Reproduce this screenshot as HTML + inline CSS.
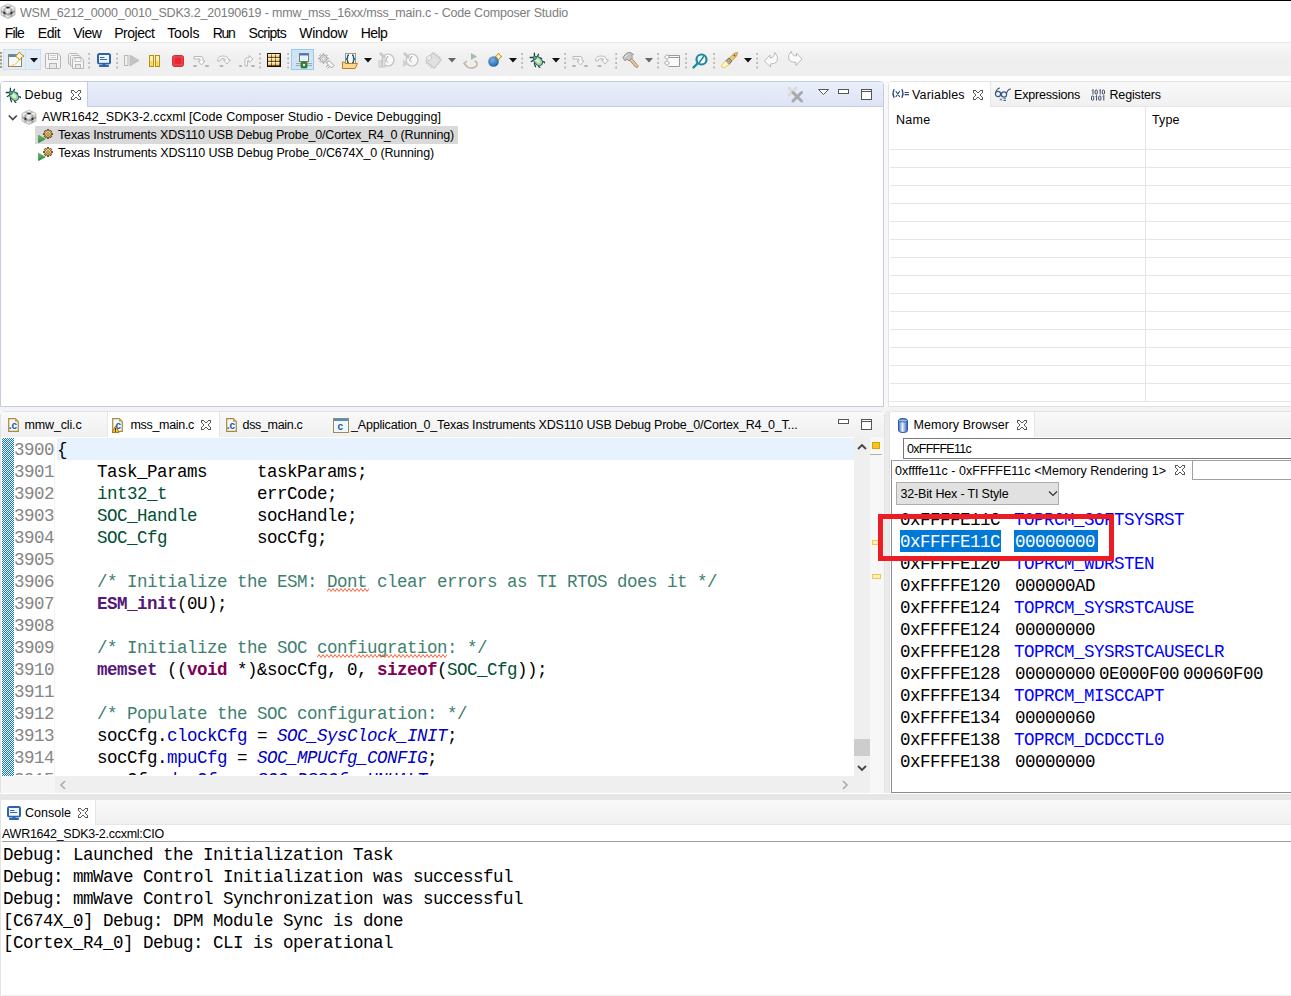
<!DOCTYPE html>
<html><head><meta charset="utf-8"><style>
html,body{margin:0;padding:0;}
body{width:1291px;height:996px;position:relative;overflow:hidden;background:#fff;font-family:'Liberation Sans', sans-serif;}
svg{position:absolute;}
</style></head><body>
<div style="position:absolute;left:0px;top:0px;width:1291px;height:1px;background:#000;"></div>
<svg style="left:0px;top:3px;" width="16" height="16" viewBox="0 0 16 16"><g transform="scale(1.0)"><g transform="matrix(7,-3.5,7,3.5,1,4.5)"><rect x="0.0000" y="0.0000" width="0.3434" height="0.3434" fill="#f4f4f4"/><rect x="0.0000" y="0.3333" width="0.3434" height="0.3434" fill="#b8b8b8"/><rect x="0.0000" y="0.6667" width="0.3434" height="0.3434" fill="#f4f4f4"/><rect x="0.3333" y="0.0000" width="0.3434" height="0.3434" fill="#b8b8b8"/><rect x="0.3333" y="0.3333" width="0.3434" height="0.3434" fill="#2a2a2a"/><rect x="0.3333" y="0.6667" width="0.3434" height="0.3434" fill="#b8b8b8"/><rect x="0.6667" y="0.0000" width="0.3434" height="0.3434" fill="#f4f4f4"/><rect x="0.6667" y="0.3333" width="0.3434" height="0.3434" fill="#b8b8b8"/><rect x="0.6667" y="0.6667" width="0.3434" height="0.3434" fill="#f4f4f4"/></g><g transform="matrix(7,3.5,0,7.5,1,4.5)"><rect x="0.0000" y="0.0000" width="0.3434" height="0.3434" fill="#e6e6e6"/><rect x="0.0000" y="0.3333" width="0.3434" height="0.3434" fill="#a8a8a8"/><rect x="0.0000" y="0.6667" width="0.3434" height="0.3434" fill="#e6e6e6"/><rect x="0.3333" y="0.0000" width="0.3434" height="0.3434" fill="#a8a8a8"/><rect x="0.3333" y="0.3333" width="0.3434" height="0.3434" fill="#2a2a2a"/><rect x="0.3333" y="0.6667" width="0.3434" height="0.3434" fill="#a8a8a8"/><rect x="0.6667" y="0.0000" width="0.3434" height="0.3434" fill="#e6e6e6"/><rect x="0.6667" y="0.3333" width="0.3434" height="0.3434" fill="#a8a8a8"/><rect x="0.6667" y="0.6667" width="0.3434" height="0.3434" fill="#e6e6e6"/></g><g transform="matrix(7,-3.5,0,7.5,8,8)"><rect x="0.0000" y="0.0000" width="0.3434" height="0.3434" fill="#d8d8d8"/><rect x="0.0000" y="0.3333" width="0.3434" height="0.3434" fill="#9a9a9a"/><rect x="0.0000" y="0.6667" width="0.3434" height="0.3434" fill="#d8d8d8"/><rect x="0.3333" y="0.0000" width="0.3434" height="0.3434" fill="#9a9a9a"/><rect x="0.3333" y="0.3333" width="0.3434" height="0.3434" fill="#2a2a2a"/><rect x="0.3333" y="0.6667" width="0.3434" height="0.3434" fill="#9a9a9a"/><rect x="0.6667" y="0.0000" width="0.3434" height="0.3434" fill="#d8d8d8"/><rect x="0.6667" y="0.3333" width="0.3434" height="0.3434" fill="#9a9a9a"/><rect x="0.6667" y="0.6667" width="0.3434" height="0.3434" fill="#d8d8d8"/></g><path d="M8,1 L15,4.5 L15,12 L8,15.5 L1,12 L1,4.5 Z" fill="none" stroke="#9a9a9a" stroke-width="0.6"/></g></svg>
<div style="position:absolute;left:20px;top:7px;line-height:13.96px;white-space:pre;font-family:'Liberation Sans', sans-serif;font-size:12.5px;color:#7c7c7c;letter-spacing:-0.178px;">WSM_6212_0000_0010_SDK3.2_20190619 - mmw_mss_16xx/mss_main.c - Code Composer Studio</div>
<div style="position:absolute;left:4.8px;top:26px;line-height:15.64px;white-space:pre;font-family:'Liberation Sans', sans-serif;font-size:14px;color:#000;letter-spacing:-0.891px;">File</div>
<div style="position:absolute;left:37.800000000000004px;top:26px;line-height:15.64px;white-space:pre;font-family:'Liberation Sans', sans-serif;font-size:14px;color:#000;letter-spacing:-0.431px;">Edit</div>
<div style="position:absolute;left:73.2px;top:26px;line-height:15.64px;white-space:pre;font-family:'Liberation Sans', sans-serif;font-size:14px;color:#000;letter-spacing:-0.473px;">View</div>
<div style="position:absolute;left:114.2px;top:26px;line-height:15.64px;white-space:pre;font-family:'Liberation Sans', sans-serif;font-size:14px;color:#000;letter-spacing:-0.483px;">Project</div>
<div style="position:absolute;left:167.2px;top:26px;line-height:15.64px;white-space:pre;font-family:'Liberation Sans', sans-serif;font-size:14px;color:#000;letter-spacing:-0.097px;">Tools</div>
<div style="position:absolute;left:212.79999999999998px;top:26px;line-height:15.64px;white-space:pre;font-family:'Liberation Sans', sans-serif;font-size:14px;color:#000;letter-spacing:-1.296px;">Run</div>
<div style="position:absolute;left:248.6px;top:26px;line-height:15.64px;white-space:pre;font-family:'Liberation Sans', sans-serif;font-size:14px;color:#000;letter-spacing:-0.785px;">Scripts</div>
<div style="position:absolute;left:299.2px;top:26px;line-height:15.64px;white-space:pre;font-family:'Liberation Sans', sans-serif;font-size:14px;color:#000;letter-spacing:-0.266px;">Window</div>
<div style="position:absolute;left:360.7px;top:26px;line-height:15.64px;white-space:pre;font-family:'Liberation Sans', sans-serif;font-size:14px;color:#000;letter-spacing:-0.524px;">Help</div>
<div style="position:absolute;left:0px;top:42px;width:1291px;height:34px;background:linear-gradient(#f9f9f9,#efefef 50%,#efefef);"></div>
<div style="position:absolute;left:0px;top:42px;width:1291px;height:1px;background:#ebebeb;"></div>
<svg style="left:0px;top:51px;" width="2" height="17" viewBox="0 0 2 17"><rect x="0" y="1" width="2" height="2" fill="#a39a88"/><rect x="0" y="4.5" width="2" height="2" fill="#a39a88"/><rect x="0" y="8" width="2" height="2" fill="#a39a88"/><rect x="0" y="11.5" width="2" height="2" fill="#a39a88"/><rect x="0" y="15" width="2" height="2" fill="#a39a88"/></svg>
<div style="position:absolute;left:3px;top:49px;width:38px;height:21px;box-sizing:border-box;background:#e3edf7;border:1px solid #cfe0f1;"></div>
<div style="position:absolute;left:25px;top:50px;width:1px;height:19px;background:#d3e2f1;"></div>
<svg style="left:8px;top:52px;" width="16" height="16" viewBox="0 0 16 16"><rect x="0.5" y="2.5" width="13" height="12" fill="#f4f9ff" stroke="#9c8550"/>
<rect x="1" y="3" width="12" height="2" fill="#3d8fd6"/>
<path d="M2,14 C8,13 11,9 12,5" stroke="#f0d890" stroke-width="1.2" fill="none"/>
<path d="M11.5,0 L13.5,2.5 L16,4 L13.5,5.5 L11.5,8 L9.5,5.5 L7,4 L9.5,2.5 Z" fill="#fff7d8" stroke="#b8861a" stroke-width="1"/></svg>
<svg style="left:30px;top:58px;" width="8" height="5" viewBox="0 0 8 5"><path d="M0,0 L8,0 L4,4.5 Z" fill="#111"/></svg>
<svg style="left:45px;top:53px;" width="16" height="16" viewBox="0 0 16 16"><path d="M1.5,0.5 L13,0.5 L15.5,3 L15.5,14.5 Q15.5,15.5 14.5,15.5 L1.5,15.5 Q0.5,15.5 0.5,14.5 L0.5,1.5 Q0.5,0.5 1.5,0.5 Z" fill="#f4f4f4" stroke="#b4b4b4"/>
<rect x="3.5" y="0.5" width="9" height="6" fill="#fafafa" stroke="#b4b4b4"/>
<line x1="5" y1="2.5" x2="11" y2="2.5" stroke="#ccc"/><line x1="5" y1="4.5" x2="11" y2="4.5" stroke="#ccc"/>
<rect x="4.5" y="10.5" width="7" height="5" fill="#e8e8e8" stroke="#b4b4b4"/></svg>
<svg style="left:68px;top:53px;" width="16" height="16" viewBox="0 0 16 16"><path d="M1.5,0.5 L9,0.5 L11.5,3 L11.5,11 L0.5,11 L0.5,1.5 Z" fill="#f4f4f4" stroke="#b8b8b8"/>
<path d="M3.5,2.5 L11,2.5 L13.5,5 L13.5,13 L2.5,13 L2.5,3.5 Z" fill="#f4f4f4" stroke="#b8b8b8"/>
<path d="M5.5,4.5 L13,4.5 L15.5,7 L15.5,15.5 L4.5,15.5 L4.5,5.5 Z" fill="#f4f4f4" stroke="#b8b8b8"/>
<rect x="7" y="5" width="6" height="3.5" fill="#fafafa" stroke="#b8b8b8" stroke-width="0.8"/>
<rect x="7.5" y="11.5" width="5" height="4" fill="#e8e8e8" stroke="#b8b8b8"/></svg>
<svg style="left:88px;top:52px;" width="2" height="17" viewBox="0 0 2 17"><rect x="0.5" y="1" width="1.2" height="2" fill="#a89e8a"/><rect x="0.5" y="5.5" width="1.2" height="2" fill="#a89e8a"/><rect x="0.5" y="10" width="1.2" height="2" fill="#a89e8a"/><rect x="0.5" y="14.5" width="1.2" height="2" fill="#a89e8a"/></svg>
<svg style="left:97px;top:53px;" width="14" height="14" viewBox="0 0 14 14"><rect x="1" y="1" width="12" height="9.5" rx="1.5" fill="#fff" stroke="#2f62ad" stroke-width="2"/>
<rect x="2" y="2" width="10" height="7.5" fill="#f0f6ff"/>
<line x1="3" y1="4.5" x2="7.5" y2="4.5" stroke="#3b66a8" stroke-width="1"/><line x1="3" y1="6.5" x2="10" y2="6.5" stroke="#3b66a8" stroke-width="1"/>
<rect x="5.5" y="10.5" width="3" height="1.5" fill="#2f62ad"/><rect x="2" y="12" width="10" height="2" rx="0.8" fill="#2f62ad"/></svg>
<svg style="left:116px;top:52px;" width="2" height="17" viewBox="0 0 2 17"><rect x="0.5" y="1" width="1.2" height="2" fill="#a89e8a"/><rect x="0.5" y="5.5" width="1.2" height="2" fill="#a89e8a"/><rect x="0.5" y="10" width="1.2" height="2" fill="#a89e8a"/><rect x="0.5" y="14.5" width="1.2" height="2" fill="#a89e8a"/></svg>
<svg style="left:124px;top:55px;" width="16" height="12" viewBox="0 0 16 12"><rect x="0.5" y="0.5" width="3.5" height="10" fill="#f0f0f0" stroke="#b8b8b8"/>
<path d="M6,0 L15,5.5 L6,11 Z" fill="#c4c4c4" stroke="#b0b0b0" stroke-width="0.6"/></svg>
<svg style="left:149px;top:55px;" width="12" height="12" viewBox="0 0 12 12"><rect x="0.5" y="0.5" width="4" height="11" fill="#fcefb8" stroke="#b8900e"/>
<rect x="6.5" y="0.5" width="4" height="11" fill="#fcefb8" stroke="#b8900e"/>
<rect x="1.5" y="6" width="2" height="5" fill="#f5d040"/><rect x="7.5" y="6" width="2" height="5" fill="#f5d040"/></svg>
<svg style="left:172px;top:55px;" width="12" height="12" viewBox="0 0 12 12"><rect x="0.5" y="0.5" width="11" height="11" rx="2" fill="#e8262e" stroke="#c8323a"/>
<rect x="2" y="2" width="8" height="8" fill="none" stroke="#f07078" stroke-width="0.7"/></svg>
<svg style="left:193px;top:55px;" width="16" height="12" viewBox="0 0 16 12"><path d="M1,1.5 L8,1.5 Q10,1.5 10,3.5 L10,6 L12,6 L8.5,10 L5,6 L7,6 L7,4 L1,4 Z" fill="#fafafa" stroke="#b4b4b4" stroke-width="0.9"/>
<rect x="0" y="10" width="4" height="2" rx="1" fill="#b4b4b4"/><rect x="12" y="10" width="4" height="2" rx="1" fill="#b4b4b4"/></svg>
<svg style="left:216px;top:55px;" width="16" height="12" viewBox="0 0 16 12"><path d="M1.5,6 Q1.5,1 7,1 Q12.5,1 12.5,5 L14.5,5 L11,9 L7.5,5 L9.5,5 Q9.5,3.5 7,3.5 Q4,3.5 4,6 Z" fill="#fafafa" stroke="#b4b4b4" stroke-width="0.9"/>
<rect x="3.5" y="10" width="4" height="2" rx="1" fill="#b4b4b4"/></svg>
<svg style="left:239px;top:55px;" width="16" height="12" viewBox="0 0 16 12"><path d="M6,11 L6,5 Q6,3 8,3 L10,3 L10,0.5 L14,4 L10,7.5 L10,5.5 L8.5,5.5 L8.5,11 Z" fill="#fafafa" stroke="#b4b4b4" stroke-width="0.9"/>
<rect x="0" y="10" width="3" height="2" rx="1" fill="#b4b4b4"/><rect x="12" y="10" width="4" height="2" rx="1" fill="#b4b4b4"/></svg>
<svg style="left:259px;top:52px;" width="2" height="17" viewBox="0 0 2 17"><rect x="0.5" y="1" width="1.2" height="2" fill="#a89e8a"/><rect x="0.5" y="5.5" width="1.2" height="2" fill="#a89e8a"/><rect x="0.5" y="10" width="1.2" height="2" fill="#a89e8a"/><rect x="0.5" y="14.5" width="1.2" height="2" fill="#a89e8a"/></svg>
<svg style="left:267px;top:53px;" width="14" height="14" viewBox="0 0 14 14"><rect x="0" y="0" width="14" height="14" rx="0.5" fill="#111"/><rect x="1" y="1" width="3.4" height="3.4" fill="#ffc860"/><rect x="1" y="1" width="3.4" height="1.4" fill="#fff4d0"/><rect x="1" y="5" width="3.4" height="3.4" fill="#ffc860"/><rect x="1" y="5" width="3.4" height="1.4" fill="#fff4d0"/><rect x="1" y="9" width="3.4" height="3.4" fill="#ffc860"/><rect x="1" y="9" width="3.4" height="1.4" fill="#fff4d0"/><rect x="5" y="1" width="3.4" height="3.4" fill="#ffc860"/><rect x="5" y="1" width="3.4" height="1.4" fill="#fff4d0"/><rect x="5" y="5" width="3.4" height="3.4" fill="#ffc860"/><rect x="5" y="5" width="3.4" height="1.4" fill="#fff4d0"/><rect x="5" y="9" width="3.4" height="3.4" fill="#ffc860"/><rect x="5" y="9" width="3.4" height="1.4" fill="#fff4d0"/><rect x="9" y="1" width="3.4" height="3.4" fill="#ffc860"/><rect x="9" y="1" width="3.4" height="1.4" fill="#fff4d0"/><rect x="9" y="5" width="3.4" height="3.4" fill="#ffc860"/><rect x="9" y="5" width="3.4" height="1.4" fill="#fff4d0"/><rect x="9" y="9" width="3.4" height="3.4" fill="#ffc860"/><rect x="9" y="9" width="3.4" height="1.4" fill="#fff4d0"/></svg>
<svg style="left:287px;top:52px;" width="2" height="17" viewBox="0 0 2 17"><rect x="0.5" y="1" width="1.2" height="2" fill="#a89e8a"/><rect x="0.5" y="5.5" width="1.2" height="2" fill="#a89e8a"/><rect x="0.5" y="10" width="1.2" height="2" fill="#a89e8a"/><rect x="0.5" y="14.5" width="1.2" height="2" fill="#a89e8a"/></svg>
<div style="position:absolute;left:291px;top:49px;width:23px;height:21px;box-sizing:border-box;background:#cce4f7;border:1px solid #99c9ef;"></div>
<svg style="left:296px;top:53px;" width="16" height="16" viewBox="0 0 16 16"><rect x="3.5" y="0.5" width="9" height="8" fill="#e8f4ff" stroke="#8a7a50"/>
<rect x="3.5" y="0.5" width="9" height="2" fill="#4a7ac8"/>
<line x1="6" y1="8.5" x2="6" y2="11" stroke="#b09090"/><line x1="9.5" y1="8.5" x2="9.5" y2="11" stroke="#b09090"/>
<line x1="0" y1="10.5" x2="16" y2="10.5" stroke="#b8a0a0" stroke-width="1"/><line x1="0" y1="12.5" x2="16" y2="12.5" stroke="#b8a0a0" stroke-width="1"/>
<rect x="5" y="9" width="6" height="6" rx="0.8" fill="#2e8a40" stroke="#1c6a28" stroke-width="0.6"/><rect x="7" y="11" width="2" height="2" fill="#e8f8c8"/></svg>
<svg style="left:318px;top:53px;" width="17" height="17" viewBox="0 0 17 17"><polygon points="8.44,4.90 10.28,5.02 10.28,5.98 8.44,6.10 8.00,7.16 9.22,8.54 8.54,9.22 7.16,8.00 6.10,8.44 5.98,10.28 5.02,10.28 4.90,8.44 3.84,8.00 2.46,9.22 1.78,8.54 3.00,7.16 2.56,6.10 0.72,5.98 0.72,5.02 2.56,4.90 3.00,3.84 1.78,2.46 2.46,1.78 3.84,3.00 4.90,2.56 5.02,0.72 5.98,0.72 6.10,2.56 7.16,3.00 8.54,1.78 9.22,2.46 8.00,3.84" fill="#f4f4f4" stroke="#a0a0a0" stroke-width="1"/>
<circle cx="5.5" cy="5.5" r="1.6" fill="#fff" stroke="#a0a0a0" stroke-width="0.8"/>
<path d="M8.5,10 L11,7.5 L16,12.5 L13.5,15 Z" fill="#fafafa" stroke="#a0a0a0" stroke-width="1"/>
<path d="M10,12 L8,14 M11.5,13.5 L9.5,15.5" stroke="#a0a0a0" stroke-width="1"/></svg>
<svg style="left:342px;top:53px;" width="16" height="16" viewBox="0 0 16 16"><rect x="3.5" y="0.5" width="10" height="11" fill="#fcfcfc" stroke="#9a9a8a"/>
<path d="M7,2 Q5.5,2 5.5,3.5 L5.5,5 L4.5,6 L5.5,7 L5.5,8.5 Q5.5,10 7,10 M10,2 Q11.5,2 11.5,3.5 L11.5,5 L12.5,6 L11.5,7 L11.5,8.5 Q11.5,10 10,10" fill="none" stroke="#155a7a" stroke-width="1.4"/>
<path d="M0.5,9 L0.5,15.5 L13,15.5 L15.5,10.5 L3.5,10.5 L2.5,9 Z" fill="#fbd88a" stroke="#c07a20"/></svg>
<svg style="left:364px;top:58px;" width="8" height="5" viewBox="0 0 8 5"><path d="M0,0 L8,0 L4,4.5 Z" fill="#111"/></svg>
<svg style="left:378px;top:52px;" width="17" height="16" viewBox="0 0 17 16"><circle cx="10" cy="8" r="6" fill="#f8f8f8" stroke="#c0c0c0" stroke-width="1.2"/>
<path d="M10,4 L7.5,8 L10,10.5" fill="none" stroke="#a0a0a0" stroke-width="1"/>
<path d="M1,2 L3,0 L8,5 L6,7 Z" fill="#c8c8c8"/><rect x="1" y="9" width="2.5" height="6" fill="#e4e4e4" stroke="#c0c0c0" stroke-width="0.8"/><rect x="4.5" y="8" width="2.5" height="7" fill="#e4e4e4" stroke="#c0c0c0" stroke-width="0.8"/></svg>
<svg style="left:402px;top:52px;" width="17" height="16" viewBox="0 0 17 16"><circle cx="10" cy="8" r="6" fill="#f8f8f8" stroke="#c0c0c0" stroke-width="1.2"/>
<path d="M10,4 L7.5,8 L10,10.5" fill="none" stroke="#a0a0a0" stroke-width="1"/>
<path d="M1,2 L3,0 L8,5 L6,7 Z" fill="#c8c8c8"/><path d="M1,8 L1,15 L7,11.5 Z" fill="#d0d0d0"/></svg>
<svg style="left:425px;top:52px;" width="17" height="17" viewBox="0 0 17 17"><g transform="rotate(40 8.5 8.5)"><rect x="3" y="3" width="11" height="11" fill="#e0e0e0" stroke="#c4c4c4"/>
<path d="M5,1 L5,3 M8,1 L8,3 M11,1 L11,3 M5,14 L5,16 M8,14 L8,16 M11,14 L11,16" stroke="#c4c4c4"/></g>
<path d="M1,6 L5,3 L7,6 L4,9 Z" fill="#eeeeee" stroke="#c4c4c4"/></svg>
<svg style="left:448px;top:58px;" width="8" height="5" viewBox="0 0 8 5"><path d="M0,0 L8,0 L4,4.5 Z" fill="#666"/></svg>
<svg style="left:463px;top:53px;" width="16" height="16" viewBox="0 0 16 16"><path d="M8,0 L8,7 L14,3.5 Z" fill="#a8bca8"/>
<path d="M4,8 L1,10.5 L4,13 M1.5,10.5 Q4,15.5 9,15 Q14,14.5 14,11 Q14,8.5 11.5,8" fill="none" stroke="#c0b8a0" stroke-width="1.6"/></svg>
<svg style="left:488px;top:53px;" width="14" height="14" viewBox="0 0 14 14"><defs><radialGradient id="bg1" cx="0.4" cy="0.35" r="0.7"><stop offset="0" stop-color="#7ab0e8"/><stop offset="1" stop-color="#1f5faa"/></radialGradient></defs>
<circle cx="5.5" cy="8.5" r="5.3" fill="url(#bg1)"/>
<path d="M10.5,0 L12,2.5 L14,3.5 L12,4.5 L10.5,7 L9,4.5 L7,3.5 L9,2.5 Z" fill="#fff7d8" stroke="#c08a10" stroke-width="0.9"/></svg>
<svg style="left:509px;top:58px;" width="8" height="5" viewBox="0 0 8 5"><path d="M0,0 L8,0 L4,4.5 Z" fill="#111"/></svg>
<svg style="left:521px;top:52px;" width="2" height="17" viewBox="0 0 2 17"><rect x="0.5" y="1" width="1.2" height="2" fill="#a89e8a"/><rect x="0.5" y="5.5" width="1.2" height="2" fill="#a89e8a"/><rect x="0.5" y="10" width="1.2" height="2" fill="#a89e8a"/><rect x="0.5" y="14.5" width="1.2" height="2" fill="#a89e8a"/></svg>
<svg style="left:529px;top:52px;" width="16" height="16" viewBox="0 0 16 16"><g transform="scale(1.0)">
<path d="M5.4,1.2 L5.4,4.2 M9.5,2.3 L8.2,4.8 M1.2,5.5 L4.3,5.5 M9.3,5.4 L10.9,5.8 L12.6,6.6 M2.3,9.5 L4.8,8.2 M13.0,9.3 L15.0,9.8 L15.8,10.8 M5.4,11.1 L5.8,12.9 L6.5,14.7 M9.4,13.2 L9.8,14.7 L10.8,15.5" fill="none" stroke="#1c4436" stroke-width="1.3" stroke-linecap="round"/>
<ellipse cx="9" cy="9" rx="3.6" ry="5.2" transform="rotate(-45 9 9)" fill="#a8d098" stroke="#1f6880" stroke-width="1.1"/>
<ellipse cx="8.6" cy="8.6" rx="1.8" ry="3" transform="rotate(-45 8.6 8.6)" fill="#d8f0c8"/>
<circle cx="5.8" cy="5.8" r="1.7" fill="#6aa860" stroke="#1f6880" stroke-width="0.9"/></g></svg>
<svg style="left:552px;top:58px;" width="8" height="5" viewBox="0 0 8 5"><path d="M0,0 L8,0 L4,4.5 Z" fill="#111"/></svg>
<svg style="left:564px;top:52px;" width="2" height="17" viewBox="0 0 2 17"><rect x="0.5" y="1" width="1.2" height="2" fill="#a89e8a"/><rect x="0.5" y="5.5" width="1.2" height="2" fill="#a89e8a"/><rect x="0.5" y="10" width="1.2" height="2" fill="#a89e8a"/><rect x="0.5" y="14.5" width="1.2" height="2" fill="#a89e8a"/></svg>
<svg style="left:572px;top:55px;" width="16" height="12" viewBox="0 0 16 12"><path d="M1,1.5 L8,1.5 Q10,1.5 10,3.5 L10,6 L12,6 L8.5,10 L5,6 L7,6 L7,4 L1,4 Z" fill="#fafafa" stroke="#b4b4b4" stroke-width="0.9"/>
<rect x="0" y="10" width="4" height="2" rx="1" fill="#b4b4b4"/><rect x="12" y="10" width="4" height="2" rx="1" fill="#b4b4b4"/></svg>
<svg style="left:594px;top:55px;" width="16" height="12" viewBox="0 0 16 12"><path d="M1.5,6 Q1.5,1 7,1 Q12.5,1 12.5,5 L14.5,5 L11,9 L7.5,5 L9.5,5 Q9.5,3.5 7,3.5 Q4,3.5 4,6 Z" fill="#fafafa" stroke="#b4b4b4" stroke-width="0.9"/>
<rect x="3.5" y="10" width="4" height="2" rx="1" fill="#b4b4b4"/></svg>
<svg style="left:615px;top:52px;" width="2" height="17" viewBox="0 0 2 17"><rect x="0.5" y="1" width="1.2" height="2" fill="#a89e8a"/><rect x="0.5" y="5.5" width="1.2" height="2" fill="#a89e8a"/><rect x="0.5" y="10" width="1.2" height="2" fill="#a89e8a"/><rect x="0.5" y="14.5" width="1.2" height="2" fill="#a89e8a"/></svg>
<svg style="left:622px;top:52px;" width="17" height="16" viewBox="0 0 17 16"><path d="M7,7.5 L13.5,15 Q15,16 16,14.8 Q16.5,13.5 15,12.5 L9,5.5 Z" fill="#e0c4a0" stroke="#a8845a" stroke-width="0.9"/>
<path d="M0.8,5.5 L4.5,1.2 Q6.5,0 9,0.8 L11.5,2.5 L9.5,3.5 L10.5,5.5 L7,9 L5,7.2 L3,8.8 Z" fill="#c4c4c4" stroke="#8a8a8a" stroke-width="0.9"/>
<path d="M2.5,5.5 L5.5,2.5" stroke="#e8e8e8" stroke-width="1"/></svg>
<svg style="left:645px;top:58px;" width="8" height="5" viewBox="0 0 8 5"><path d="M0,0 L8,0 L4,4.5 Z" fill="#666"/></svg>
<svg style="left:657px;top:52px;" width="2" height="17" viewBox="0 0 2 17"><rect x="0.5" y="1" width="1.2" height="2" fill="#a89e8a"/><rect x="0.5" y="5.5" width="1.2" height="2" fill="#a89e8a"/><rect x="0.5" y="10" width="1.2" height="2" fill="#a89e8a"/><rect x="0.5" y="14.5" width="1.2" height="2" fill="#a89e8a"/></svg>
<svg style="left:664px;top:54px;" width="16" height="13" viewBox="0 0 16 13"><path d="M4.5,1.5 L15.5,1.5 L15.5,12.5 L4.5,12.5" fill="#fafafa" stroke="#999"/>
<line x1="4.5" y1="3.5" x2="15.5" y2="3.5" stroke="#999"/>
<path d="M0.5,3 L3,0.5 L5.5,3 L3,5.5 Z M0.5,9 L3,6.5 L5.5,9 L3,11.5 Z" fill="#fafafa" stroke="#999" stroke-width="0.9"/></svg>
<svg style="left:685px;top:52px;" width="2" height="17" viewBox="0 0 2 17"><rect x="0.5" y="1" width="1.2" height="2" fill="#a89e8a"/><rect x="0.5" y="5.5" width="1.2" height="2" fill="#a89e8a"/><rect x="0.5" y="10" width="1.2" height="2" fill="#a89e8a"/><rect x="0.5" y="14.5" width="1.2" height="2" fill="#a89e8a"/></svg>
<svg style="left:692px;top:53px;" width="16" height="16" viewBox="0 0 16 16"><circle cx="9.5" cy="6.5" r="5" fill="#fff" stroke="#1a8aa0" stroke-width="2.2"/>
<line x1="12" y1="3" x2="7" y2="10" stroke="#1a8aa0" stroke-width="1.5"/>
<line x1="5.5" y1="10.5" x2="1.5" y2="14.5" stroke="#1a8aa0" stroke-width="2.4" stroke-linecap="round"/></svg>
<svg style="left:713px;top:52px;" width="2" height="17" viewBox="0 0 2 17"><rect x="0.5" y="1" width="1.2" height="2" fill="#a89e8a"/><rect x="0.5" y="5.5" width="1.2" height="2" fill="#a89e8a"/><rect x="0.5" y="10" width="1.2" height="2" fill="#a89e8a"/><rect x="0.5" y="14.5" width="1.2" height="2" fill="#a89e8a"/></svg>
<svg style="left:721px;top:52px;" width="17" height="16" viewBox="0 0 17 16"><path d="M8,6.5 L13,1.5 L16.5,0.5 L15.5,4 L10.5,9 Z" fill="#f8cc60" stroke="#c08a2a" stroke-width="0.9"/>
<circle cx="13.5" cy="3.5" r="0.9" fill="#2a5aa0"/>
<path d="M4.5,9 L8,6 L11,9 L8,12.5 Z" fill="#a8a4a8" stroke="#7a6a50" stroke-width="0.9"/>
<path d="M0.5,13.5 L4.5,9 L8,12.5 L3,16 Q0.5,16 0.5,13.5 Z" fill="#fff8c8" stroke="#e8c050" stroke-width="0.9"/></svg>
<svg style="left:744px;top:58px;" width="8" height="5" viewBox="0 0 8 5"><path d="M0,0 L8,0 L4,4.5 Z" fill="#111"/></svg>
<svg style="left:756px;top:52px;" width="2" height="17" viewBox="0 0 2 17"><rect x="0.5" y="1" width="1.2" height="2" fill="#a89e8a"/><rect x="0.5" y="5.5" width="1.2" height="2" fill="#a89e8a"/><rect x="0.5" y="10" width="1.2" height="2" fill="#a89e8a"/><rect x="0.5" y="14.5" width="1.2" height="2" fill="#a89e8a"/></svg>
<svg style="left:764px;top:52px;" width="17" height="16" viewBox="0 0 17 16"><path d="M0.5,9 L6,3 L6,6 Q10,6 11,0.5 Q15,5 13,9.5 Q11,12 6.5,12 L6.5,15 Z" fill="#fafafa" stroke="#b4b4b4" stroke-width="0.9"/></svg>
<svg style="left:786px;top:51px;" width="17" height="16" viewBox="0 0 17 16"><path d="M16,8 L10.5,2 L10.5,5 Q6.5,5 5,0.5 Q1,4.5 3,9 Q5,11.5 10,11.5 L10,14.5 Z" fill="#fafafa" stroke="#b4b4b4" stroke-width="0.9"/></svg>
<div style="position:absolute;left:0px;top:81px;width:884px;height:326px;background:#fff;box-sizing:border-box;border:1px solid #c3cbe0;border-radius:4px 4px 0 0;"></div>
<div style="position:absolute;left:1px;top:82px;width:882px;height:25px;background:linear-gradient(#eaeffb,#dde3f4);border-radius:3px 3px 0 0;"></div>
<div style="position:absolute;left:1px;top:106px;width:882px;height:1px;background:#c5cde0;"></div>
<div style="position:absolute;left:1px;top:82px;width:87px;height:25px;background:#fff;border-radius:3px 3px 0 0;"></div>
<div style="position:absolute;left:87px;top:82px;width:1px;height:25px;background:#c5cde0;"></div>
<div style="position:absolute;left:24.5px;top:89px;line-height:13.96px;white-space:pre;font-family:'Liberation Sans', sans-serif;font-size:12.5px;color:#000;letter-spacing:0.231px;">Debug</div>
<svg style="left:71px;top:90px;" width="10" height="10" viewBox="0 0 10 10"><g fill="#5a5a5a" shape-rendering="crispEdges"><rect x="0" y="0" width="1" height="1"/><rect x="1" y="0" width="1" height="1"/><rect x="2" y="0" width="1" height="1"/><rect x="7" y="0" width="1" height="1"/><rect x="8" y="0" width="1" height="1"/><rect x="9" y="0" width="1" height="1"/><rect x="0" y="1" width="1" height="1"/><rect x="3" y="1" width="1" height="1"/><rect x="6" y="1" width="1" height="1"/><rect x="9" y="1" width="1" height="1"/><rect x="0" y="2" width="1" height="1"/><rect x="4" y="2" width="1" height="1"/><rect x="5" y="2" width="1" height="1"/><rect x="9" y="2" width="1" height="1"/><rect x="1" y="3" width="1" height="1"/><rect x="8" y="3" width="1" height="1"/><rect x="2" y="4" width="1" height="1"/><rect x="7" y="4" width="1" height="1"/><rect x="2" y="5" width="1" height="1"/><rect x="7" y="5" width="1" height="1"/><rect x="1" y="6" width="1" height="1"/><rect x="8" y="6" width="1" height="1"/><rect x="0" y="7" width="1" height="1"/><rect x="4" y="7" width="1" height="1"/><rect x="5" y="7" width="1" height="1"/><rect x="9" y="7" width="1" height="1"/><rect x="0" y="8" width="1" height="1"/><rect x="3" y="8" width="1" height="1"/><rect x="6" y="8" width="1" height="1"/><rect x="9" y="8" width="1" height="1"/><rect x="0" y="9" width="1" height="1"/><rect x="1" y="9" width="1" height="1"/><rect x="2" y="9" width="1" height="1"/><rect x="7" y="9" width="1" height="1"/><rect x="8" y="9" width="1" height="1"/><rect x="9" y="9" width="1" height="1"/></g></svg>
<svg style="left:5px;top:87px;" width="16" height="16" viewBox="0 0 16 16"><g transform="scale(1.0)">
<path d="M5.4,1.2 L5.4,4.2 M9.5,2.3 L8.2,4.8 M1.2,5.5 L4.3,5.5 M9.3,5.4 L10.9,5.8 L12.6,6.6 M2.3,9.5 L4.8,8.2 M13.0,9.3 L15.0,9.8 L15.8,10.8 M5.4,11.1 L5.8,12.9 L6.5,14.7 M9.4,13.2 L9.8,14.7 L10.8,15.5" fill="none" stroke="#1c4436" stroke-width="1.3" stroke-linecap="round"/>
<ellipse cx="9" cy="9" rx="3.6" ry="5.2" transform="rotate(-45 9 9)" fill="#a8d098" stroke="#1f6880" stroke-width="1.1"/>
<ellipse cx="8.6" cy="8.6" rx="1.8" ry="3" transform="rotate(-45 8.6 8.6)" fill="#d8f0c8"/>
<circle cx="5.8" cy="5.8" r="1.7" fill="#6aa860" stroke="#1f6880" stroke-width="0.9"/></g></svg>
<svg style="left:787px;top:86px;" width="17" height="17" viewBox="0 0 17 17"><path d="M2,2 L9,9 M9,2 L2,9" stroke="#d4d4d4" stroke-width="2.6" stroke-linecap="round"/>
<path d="M2,2 L9,9 M9,2 L2,9" stroke="#e8e8e8" stroke-width="1" stroke-linecap="round"/>
<path d="M6,6.5 L14.5,15 M14.5,6.5 L6,15" stroke="#aaaaaa" stroke-width="3" stroke-linecap="round"/></svg>
<svg style="left:818px;top:89px;" width="11" height="6" viewBox="0 0 11 6"><path d="M0.5,0.5 L10.5,0.5 L5.5,5.5 Z" fill="#fff" stroke="#555" stroke-width="1"/></svg>
<svg style="left:838px;top:89px;" width="11" height="5" viewBox="0 0 11 5"><rect x="0.5" y="0.5" width="10" height="4" fill="#fff" stroke="#555"/></svg>
<svg style="left:861px;top:89px;" width="11" height="11" viewBox="0 0 11 11"><rect x="0.5" y="0.5" width="10" height="10" fill="#fff" stroke="#555"/><line x1="0.5" y1="2.5" x2="10.5" y2="2.5" stroke="#555"/></svg>
<svg style="left:8px;top:114px;" width="10" height="8" viewBox="0 0 10 8"><path d="M0.8,1.5 L4.8,5.5 L8.8,1.5" fill="none" stroke="#444" stroke-width="1.6"/></svg>
<svg style="left:21px;top:109px;" width="16" height="16" viewBox="0 0 16 16"><g transform="scale(1.0)"><g transform="matrix(7,-3.5,7,3.5,1,4.5)"><rect x="0.0000" y="0.0000" width="0.3434" height="0.3434" fill="#f4f4f4"/><rect x="0.0000" y="0.3333" width="0.3434" height="0.3434" fill="#b8b8b8"/><rect x="0.0000" y="0.6667" width="0.3434" height="0.3434" fill="#f4f4f4"/><rect x="0.3333" y="0.0000" width="0.3434" height="0.3434" fill="#b8b8b8"/><rect x="0.3333" y="0.3333" width="0.3434" height="0.3434" fill="#2a2a2a"/><rect x="0.3333" y="0.6667" width="0.3434" height="0.3434" fill="#b8b8b8"/><rect x="0.6667" y="0.0000" width="0.3434" height="0.3434" fill="#f4f4f4"/><rect x="0.6667" y="0.3333" width="0.3434" height="0.3434" fill="#b8b8b8"/><rect x="0.6667" y="0.6667" width="0.3434" height="0.3434" fill="#f4f4f4"/></g><g transform="matrix(7,3.5,0,7.5,1,4.5)"><rect x="0.0000" y="0.0000" width="0.3434" height="0.3434" fill="#e6e6e6"/><rect x="0.0000" y="0.3333" width="0.3434" height="0.3434" fill="#a8a8a8"/><rect x="0.0000" y="0.6667" width="0.3434" height="0.3434" fill="#e6e6e6"/><rect x="0.3333" y="0.0000" width="0.3434" height="0.3434" fill="#a8a8a8"/><rect x="0.3333" y="0.3333" width="0.3434" height="0.3434" fill="#2a2a2a"/><rect x="0.3333" y="0.6667" width="0.3434" height="0.3434" fill="#a8a8a8"/><rect x="0.6667" y="0.0000" width="0.3434" height="0.3434" fill="#e6e6e6"/><rect x="0.6667" y="0.3333" width="0.3434" height="0.3434" fill="#a8a8a8"/><rect x="0.6667" y="0.6667" width="0.3434" height="0.3434" fill="#e6e6e6"/></g><g transform="matrix(7,-3.5,0,7.5,8,8)"><rect x="0.0000" y="0.0000" width="0.3434" height="0.3434" fill="#d8d8d8"/><rect x="0.0000" y="0.3333" width="0.3434" height="0.3434" fill="#9a9a9a"/><rect x="0.0000" y="0.6667" width="0.3434" height="0.3434" fill="#d8d8d8"/><rect x="0.3333" y="0.0000" width="0.3434" height="0.3434" fill="#9a9a9a"/><rect x="0.3333" y="0.3333" width="0.3434" height="0.3434" fill="#2a2a2a"/><rect x="0.3333" y="0.6667" width="0.3434" height="0.3434" fill="#9a9a9a"/><rect x="0.6667" y="0.0000" width="0.3434" height="0.3434" fill="#d8d8d8"/><rect x="0.6667" y="0.3333" width="0.3434" height="0.3434" fill="#9a9a9a"/><rect x="0.6667" y="0.6667" width="0.3434" height="0.3434" fill="#d8d8d8"/></g><path d="M8,1 L15,4.5 L15,12 L8,15.5 L1,12 L1,4.5 Z" fill="none" stroke="#9a9a9a" stroke-width="0.6"/></g></svg>
<div style="position:absolute;left:42px;top:111px;line-height:13.96px;white-space:pre;font-family:'Liberation Sans', sans-serif;font-size:12.5px;color:#000;letter-spacing:0.044px;">AWR1642_SDK3-2.ccxml [Code Composer Studio - Device Debugging]</div>
<div style="position:absolute;left:35px;top:126px;width:423px;height:18px;background:#d9d9d9;"></div>
<svg style="left:43px;top:129px;" width="10" height="10" viewBox="0 0 10 10"><defs><linearGradient id="gg" x1="0" y1="0" x2="0" y2="1"><stop offset="0" stop-color="#fff2a0"/><stop offset="1" stop-color="#f0a020"/></linearGradient></defs>
<polygon points="4.28,1.78 4.46,0.53 5.54,0.53 5.72,1.78 6.26,1.95 6.77,2.21 7.78,1.46 8.54,2.22 7.79,3.23 8.05,3.74 8.22,4.28 9.47,4.46 9.47,5.54 8.22,5.72 8.05,6.26 7.79,6.77 8.54,7.78 7.78,8.54 6.77,7.79 6.26,8.05 5.72,8.22 5.54,9.47 4.46,9.47 4.28,8.22 3.74,8.05 3.23,7.79 2.22,8.54 1.46,7.78 2.21,6.77 1.95,6.26 1.78,5.72 0.53,5.54 0.53,4.46 1.78,4.28 1.95,3.74 2.21,3.23 1.46,2.22 2.22,1.46 3.23,2.21 3.74,1.95" fill="url(#gg)" stroke="#4a2810" stroke-width="1"/>
<circle cx="5" cy="5" r="1.3" fill="#fff" stroke="#6a4a30" stroke-width="0.8"/></svg>
<svg style="left:38px;top:135px;" width="8" height="8" viewBox="0 0 8 8"><defs><linearGradient id="rg" x1="0" y1="0" x2="0" y2="1"><stop offset="0" stop-color="#6cc070"/><stop offset="1" stop-color="#1e8a3a"/></linearGradient></defs><path d="M0.5,0.3 L7.3,4 L0.5,7.7 Z" fill="url(#rg)" stroke="#2a8a40" stroke-width="0.6"/></svg>
<svg style="left:43px;top:147px;" width="10" height="10" viewBox="0 0 10 10"><defs><linearGradient id="gg" x1="0" y1="0" x2="0" y2="1"><stop offset="0" stop-color="#fff2a0"/><stop offset="1" stop-color="#f0a020"/></linearGradient></defs>
<polygon points="4.28,1.78 4.46,0.53 5.54,0.53 5.72,1.78 6.26,1.95 6.77,2.21 7.78,1.46 8.54,2.22 7.79,3.23 8.05,3.74 8.22,4.28 9.47,4.46 9.47,5.54 8.22,5.72 8.05,6.26 7.79,6.77 8.54,7.78 7.78,8.54 6.77,7.79 6.26,8.05 5.72,8.22 5.54,9.47 4.46,9.47 4.28,8.22 3.74,8.05 3.23,7.79 2.22,8.54 1.46,7.78 2.21,6.77 1.95,6.26 1.78,5.72 0.53,5.54 0.53,4.46 1.78,4.28 1.95,3.74 2.21,3.23 1.46,2.22 2.22,1.46 3.23,2.21 3.74,1.95" fill="url(#gg)" stroke="#4a2810" stroke-width="1"/>
<circle cx="5" cy="5" r="1.3" fill="#fff" stroke="#6a4a30" stroke-width="0.8"/></svg>
<svg style="left:38px;top:153px;" width="8" height="8" viewBox="0 0 8 8"><defs><linearGradient id="rg" x1="0" y1="0" x2="0" y2="1"><stop offset="0" stop-color="#6cc070"/><stop offset="1" stop-color="#1e8a3a"/></linearGradient></defs><path d="M0.5,0.3 L7.3,4 L0.5,7.7 Z" fill="url(#rg)" stroke="#2a8a40" stroke-width="0.6"/></svg>
<div style="position:absolute;left:58px;top:129px;line-height:13.96px;white-space:pre;font-family:'Liberation Sans', sans-serif;font-size:12.5px;color:#000;letter-spacing:-0.160px;">Texas Instruments XDS110 USB Debug Probe_0/Cortex_R4_0 (Running)</div>
<div style="position:absolute;left:58px;top:147px;line-height:13.96px;white-space:pre;font-family:'Liberation Sans', sans-serif;font-size:12.5px;color:#000;letter-spacing:-0.145px;">Texas Instruments XDS110 USB Debug Probe_0/C674X_0 (Running)</div>
<div style="position:absolute;left:888px;top:81px;width:403px;height:326px;background:#fff;box-sizing:border-box;border:1px solid #e3e3e3;border-right:none;border-radius:4px 0 0 0;"></div>
<div style="position:absolute;left:889px;top:82px;width:402px;height:25px;background:linear-gradient(#f9f9f9,#f0f0f0);border-radius:3px 0 0 0;"></div>
<div style="position:absolute;left:889px;top:106px;width:402px;height:1px;background:#e6e6e6;"></div>
<div style="position:absolute;left:889px;top:82px;width:101px;height:25px;background:#fff;border-radius:3px 3px 0 0;"></div>
<div style="position:absolute;left:990px;top:82px;width:1px;height:25px;background:#e6e6e6;"></div>
<div style="position:absolute;left:912px;top:89px;line-height:13.96px;white-space:pre;font-family:'Liberation Sans', sans-serif;font-size:12.5px;color:#000;letter-spacing:0.179px;">Variables</div>
<div style="position:absolute;left:1014px;top:89px;line-height:13.96px;white-space:pre;font-family:'Liberation Sans', sans-serif;font-size:12.5px;color:#000;letter-spacing:-0.172px;">Expressions</div>
<div style="position:absolute;left:1109.5px;top:89px;line-height:13.96px;white-space:pre;font-family:'Liberation Sans', sans-serif;font-size:12.5px;color:#000;letter-spacing:-0.155px;">Registers</div>
<svg style="left:973px;top:90px;" width="10" height="10" viewBox="0 0 10 10"><g fill="#5a5a5a" shape-rendering="crispEdges"><rect x="0" y="0" width="1" height="1"/><rect x="1" y="0" width="1" height="1"/><rect x="2" y="0" width="1" height="1"/><rect x="7" y="0" width="1" height="1"/><rect x="8" y="0" width="1" height="1"/><rect x="9" y="0" width="1" height="1"/><rect x="0" y="1" width="1" height="1"/><rect x="3" y="1" width="1" height="1"/><rect x="6" y="1" width="1" height="1"/><rect x="9" y="1" width="1" height="1"/><rect x="0" y="2" width="1" height="1"/><rect x="4" y="2" width="1" height="1"/><rect x="5" y="2" width="1" height="1"/><rect x="9" y="2" width="1" height="1"/><rect x="1" y="3" width="1" height="1"/><rect x="8" y="3" width="1" height="1"/><rect x="2" y="4" width="1" height="1"/><rect x="7" y="4" width="1" height="1"/><rect x="2" y="5" width="1" height="1"/><rect x="7" y="5" width="1" height="1"/><rect x="1" y="6" width="1" height="1"/><rect x="8" y="6" width="1" height="1"/><rect x="0" y="7" width="1" height="1"/><rect x="4" y="7" width="1" height="1"/><rect x="5" y="7" width="1" height="1"/><rect x="9" y="7" width="1" height="1"/><rect x="0" y="8" width="1" height="1"/><rect x="3" y="8" width="1" height="1"/><rect x="6" y="8" width="1" height="1"/><rect x="9" y="8" width="1" height="1"/><rect x="0" y="9" width="1" height="1"/><rect x="1" y="9" width="1" height="1"/><rect x="2" y="9" width="1" height="1"/><rect x="7" y="9" width="1" height="1"/><rect x="8" y="9" width="1" height="1"/><rect x="9" y="9" width="1" height="1"/></g></svg>
<svg style="left:891px;top:88px;" width="19" height="12" viewBox="0 0 19 12"><g fill="none" stroke="#2d4a75" stroke-width="1.2" stroke-linecap="round">
<path d="M3,1.5 Q1,5.5 3,9.5"/><path d="M5,3.5 L8.5,8.5 M8.5,3.5 L5,8.5"/><path d="M11,1.5 Q13,5.5 11,9.5"/>
<path d="M14,4.5 L17.5,4.5 M14,6.7 L17.5,6.7"/></g></svg>
<svg style="left:994px;top:87px;" width="18" height="15" viewBox="0 0 18 15"><g fill="#eef4fa" stroke="#3a5a80" stroke-width="1.2">
<circle cx="4" cy="7" r="2.6"/><circle cx="10" cy="7.5" r="2.6"/></g>
<path d="M1.5,6.5 Q2.5,1.5 6,1 M12.5,7 Q13.5,2 17,2" fill="none" stroke="#3a5a80" stroke-width="1.1"/>
<path d="M6.5,7 L7.5,7" stroke="#3a5a80"/>
<path d="M6,11.5 L8,13.5 M8,11.5 L6,13.5 M9.5,11.8 L12,11.8 M9.5,13.5 L12,13.5" stroke="#3a5a80" stroke-width="0.9"/></svg>
<svg style="left:1091px;top:89px;" width="15" height="12" viewBox="0 0 15 12"><path d="M1.0,1.5 L2.0,0.5 L2.0,5.5" fill="none" stroke="#3a4c6c" stroke-width="1"/><rect x="4.1" y="1.0" width="2.2" height="4.2" rx="1.1" fill="none" stroke="#3a4c6c" stroke-width="1"/><path d="M8.2,1.5 L9.2,0.5 L9.2,5.5" fill="none" stroke="#3a4c6c" stroke-width="1"/><rect x="11.3" y="1.0" width="2.2" height="4.2" rx="1.1" fill="none" stroke="#3a4c6c" stroke-width="1"/><rect x="0.5" y="7.0" width="2.2" height="4.2" rx="1.1" fill="none" stroke="#3a4c6c" stroke-width="1"/><path d="M4.6,7.5 L5.6,6.5 L5.6,11.5" fill="none" stroke="#3a4c6c" stroke-width="1"/><rect x="7.7" y="7.0" width="2.2" height="4.2" rx="1.1" fill="none" stroke="#3a4c6c" stroke-width="1"/><path d="M11.8,7.5 L12.8,6.5 L12.8,11.5" fill="none" stroke="#3a4c6c" stroke-width="1"/></svg>
<div style="position:absolute;left:896px;top:114px;line-height:13.96px;white-space:pre;font-family:'Liberation Sans', sans-serif;font-size:12.5px;color:#000;letter-spacing:0.289px;">Name</div>
<div style="position:absolute;left:1152px;top:114px;line-height:13.96px;white-space:pre;font-family:'Liberation Sans', sans-serif;font-size:12.5px;color:#000;letter-spacing:0.098px;">Type</div>
<div style="position:absolute;left:1145px;top:107px;width:1px;height:295px;background:#e6e6e6;"></div>
<div style="position:absolute;left:890px;top:149px;width:401px;height:1px;background:#e6e6e6;"></div>
<div style="position:absolute;left:890px;top:167px;width:401px;height:1px;background:#e6e6e6;"></div>
<div style="position:absolute;left:890px;top:185px;width:401px;height:1px;background:#e6e6e6;"></div>
<div style="position:absolute;left:890px;top:203px;width:401px;height:1px;background:#e6e6e6;"></div>
<div style="position:absolute;left:890px;top:221px;width:401px;height:1px;background:#e6e6e6;"></div>
<div style="position:absolute;left:890px;top:239px;width:401px;height:1px;background:#e6e6e6;"></div>
<div style="position:absolute;left:890px;top:257px;width:401px;height:1px;background:#e6e6e6;"></div>
<div style="position:absolute;left:890px;top:275px;width:401px;height:1px;background:#e6e6e6;"></div>
<div style="position:absolute;left:890px;top:293px;width:401px;height:1px;background:#e6e6e6;"></div>
<div style="position:absolute;left:890px;top:311px;width:401px;height:1px;background:#e6e6e6;"></div>
<div style="position:absolute;left:890px;top:329px;width:401px;height:1px;background:#e6e6e6;"></div>
<div style="position:absolute;left:890px;top:347px;width:401px;height:1px;background:#e6e6e6;"></div>
<div style="position:absolute;left:890px;top:365px;width:401px;height:1px;background:#e6e6e6;"></div>
<div style="position:absolute;left:890px;top:383px;width:401px;height:1px;background:#e6e6e6;"></div>
<div style="position:absolute;left:890px;top:401px;width:401px;height:1px;background:#e6e6e6;"></div>
<div style="position:absolute;left:0px;top:407px;width:1291px;height:4px;background:#f3f3f3;"></div>
<div style="position:absolute;left:884px;top:81px;width:4px;height:326px;background:#f8f8f8;"></div>
<div style="position:absolute;left:885px;top:411px;width:5px;height:383px;background:#ebebeb;"></div>
<div style="position:absolute;left:0px;top:411px;width:885px;height:383px;background:#fff;box-sizing:border-box;border:1px solid #e3e3e3;border-radius:4px 4px 0 0;"></div>
<div style="position:absolute;left:1px;top:412px;width:883px;height:25px;background:linear-gradient(#f9f9f9,#f0f0f0);border-radius:3px 3px 0 0;"></div>
<div style="position:absolute;left:108px;top:412px;width:111px;height:25px;background:#fff;"></div>
<div style="position:absolute;left:107px;top:412px;width:1px;height:25px;background:#e6e6e6;"></div>
<div style="position:absolute;left:219px;top:412px;width:1px;height:25px;background:#e6e6e6;"></div>
<div style="position:absolute;left:24.5px;top:419px;line-height:13.96px;white-space:pre;font-family:'Liberation Sans', sans-serif;font-size:12.5px;color:#000;letter-spacing:-0.149px;">mmw_cli.c</div>
<div style="position:absolute;left:130.5px;top:419px;line-height:13.96px;white-space:pre;font-family:'Liberation Sans', sans-serif;font-size:12.5px;color:#000;letter-spacing:-0.319px;">mss_main.c</div>
<svg style="left:201px;top:420px;" width="10" height="10" viewBox="0 0 10 10"><g fill="#5a5a5a" shape-rendering="crispEdges"><rect x="0" y="0" width="1" height="1"/><rect x="1" y="0" width="1" height="1"/><rect x="2" y="0" width="1" height="1"/><rect x="7" y="0" width="1" height="1"/><rect x="8" y="0" width="1" height="1"/><rect x="9" y="0" width="1" height="1"/><rect x="0" y="1" width="1" height="1"/><rect x="3" y="1" width="1" height="1"/><rect x="6" y="1" width="1" height="1"/><rect x="9" y="1" width="1" height="1"/><rect x="0" y="2" width="1" height="1"/><rect x="4" y="2" width="1" height="1"/><rect x="5" y="2" width="1" height="1"/><rect x="9" y="2" width="1" height="1"/><rect x="1" y="3" width="1" height="1"/><rect x="8" y="3" width="1" height="1"/><rect x="2" y="4" width="1" height="1"/><rect x="7" y="4" width="1" height="1"/><rect x="2" y="5" width="1" height="1"/><rect x="7" y="5" width="1" height="1"/><rect x="1" y="6" width="1" height="1"/><rect x="8" y="6" width="1" height="1"/><rect x="0" y="7" width="1" height="1"/><rect x="4" y="7" width="1" height="1"/><rect x="5" y="7" width="1" height="1"/><rect x="9" y="7" width="1" height="1"/><rect x="0" y="8" width="1" height="1"/><rect x="3" y="8" width="1" height="1"/><rect x="6" y="8" width="1" height="1"/><rect x="9" y="8" width="1" height="1"/><rect x="0" y="9" width="1" height="1"/><rect x="1" y="9" width="1" height="1"/><rect x="2" y="9" width="1" height="1"/><rect x="7" y="9" width="1" height="1"/><rect x="8" y="9" width="1" height="1"/><rect x="9" y="9" width="1" height="1"/></g></svg>
<svg style="left:8px;top:418px;" width="12" height="15" viewBox="0 0 12 15"><path d="M0.7,0.7 L7.3,0.7 L10.3,3.7 L10.3,13.3 L0.7,13.3 Z" fill="#f4f8fd" stroke="#a88a3a" stroke-width="1.2"/>
<path d="M7,0.7 L7,3.8 L10.3,3.8 Z" fill="#c8a040"/>
<text x="0.8" y="11" font-family="Liberation Sans" font-size="10" font-weight="bold" fill="#1e5a9a">.c</text></svg>
<svg style="left:112px;top:418px;" width="12" height="15" viewBox="0 0 12 15"><path d="M0.7,0.7 L7.3,0.7 L10.3,3.7 L10.3,13.3 L0.7,13.3 Z" fill="#f4f8fd" stroke="#a88a3a" stroke-width="1.2"/>
<path d="M7,0.7 L7,3.8 L10.3,3.8 Z" fill="#c8a040"/>
<text x="3.5" y="11" font-family="Liberation Sans" font-size="10" font-weight="bold" fill="#1e5a9a">c</text><path d="M3.5,8 L7,14.5 L0,14.5 Z" fill="#f5c030" stroke="#a07010" stroke-width="0.9" stroke-linejoin="round"/><rect x="3.1" y="10" width="0.9" height="2.5" fill="#222"/><rect x="3.1" y="13" width="0.9" height="0.9" fill="#222"/></svg>
<svg style="left:226px;top:418px;" width="12" height="15" viewBox="0 0 12 15"><path d="M0.7,0.7 L7.3,0.7 L10.3,3.7 L10.3,13.3 L0.7,13.3 Z" fill="#f4f8fd" stroke="#a88a3a" stroke-width="1.2"/>
<path d="M7,0.7 L7,3.8 L10.3,3.8 Z" fill="#c8a040"/>
<text x="0.8" y="11" font-family="Liberation Sans" font-size="10" font-weight="bold" fill="#1e5a9a">.c</text></svg>
<svg style="left:333px;top:418px;" width="16" height="15" viewBox="0 0 16 15"><rect x="0.5" y="0.5" width="15" height="14" fill="#f2f7fd" stroke="#9c8a5a"/>
<rect x="1" y="1" width="14" height="2" fill="#4d8fd6"/>
<text x="4.5" y="12" font-family="Liberation Sans" font-size="10" font-weight="bold" fill="#1e5a9a">c</text></svg>
<div style="position:absolute;left:242.5px;top:419px;line-height:13.96px;white-space:pre;font-family:'Liberation Sans', sans-serif;font-size:12.5px;color:#000;letter-spacing:-0.323px;">dss_main.c</div>
<div style="position:absolute;left:351px;top:419px;line-height:13.96px;white-space:pre;font-family:'Liberation Sans', sans-serif;font-size:12.5px;color:#000;letter-spacing:-0.189px;">_Application_0_Texas Instruments XDS110 USB Debug Probe_0/Cortex_R4_0_T...</div>
<svg style="left:838px;top:419px;" width="11" height="5" viewBox="0 0 11 5"><rect x="0.5" y="0.5" width="10" height="4" fill="#fff" stroke="#555"/></svg>
<svg style="left:861px;top:419px;" width="11" height="11" viewBox="0 0 11 11"><rect x="0.5" y="0.5" width="10" height="10" fill="#fff" stroke="#555"/><line x1="0.5" y1="2.5" x2="10.5" y2="2.5" stroke="#555"/></svg>
<div style="position:absolute;left:2px;top:438px;width:12px;height:338px;background:repeating-conic-gradient(#0a78d8 0% 25%, #ffffff 0% 50%) 0 0/2px 2px;"></div>
<div style="position:absolute;left:57px;top:438px;width:797px;height:22px;background:#e8f2fe;"></div>
<div style="position:absolute;left:54px;top:437px;width:1px;height:339px;background:#f3f3f3;"></div>
<div style="position:absolute;left:0;top:437px;width:854px;height:338px;overflow:hidden;">
<div style="position:absolute;left:14px;top:4px;line-height:19.82px;white-space:pre;font-family:'Liberation Mono', monospace;font-size:17.5px;color:#858585;letter-spacing:-0.504px;">3900</div>
<div style="position:absolute;left:57px;top:4px;line-height:19.82px;white-space:pre;font-family:'Liberation Mono', monospace;font-size:17.5px;color:#000;">{</div>
<div style="position:absolute;left:14px;top:26px;line-height:19.82px;white-space:pre;font-family:'Liberation Mono', monospace;font-size:17.5px;color:#858585;letter-spacing:-0.504px;">3901</div>
<div style="position:absolute;left:57px;top:26px;line-height:19.82px;white-space:pre;font-family:'Liberation Mono', monospace;font-size:17.5px;color:#000;letter-spacing:-0.502px;">    Task_Params     taskParams;</div>
<div style="position:absolute;left:14px;top:48px;line-height:19.82px;white-space:pre;font-family:'Liberation Mono', monospace;font-size:17.5px;color:#858585;letter-spacing:-0.504px;">3902</div>
<div style="position:absolute;left:57px;top:48px;line-height:19.82px;white-space:pre;font-family:'Liberation Mono', monospace;font-size:17.5px;color:#000;letter-spacing:-0.504px;">    </div>
<div style="position:absolute;left:97px;top:48px;line-height:19.82px;white-space:pre;font-family:'Liberation Mono', monospace;font-size:17.5px;color:#005032;letter-spacing:-0.502px;">int32_t</div>
<div style="position:absolute;left:167px;top:48px;line-height:19.82px;white-space:pre;font-family:'Liberation Mono', monospace;font-size:17.5px;color:#000;letter-spacing:-0.502px;">         errCode;</div>
<div style="position:absolute;left:14px;top:70px;line-height:19.82px;white-space:pre;font-family:'Liberation Mono', monospace;font-size:17.5px;color:#858585;letter-spacing:-0.504px;">3903</div>
<div style="position:absolute;left:57px;top:70px;line-height:19.82px;white-space:pre;font-family:'Liberation Mono', monospace;font-size:17.5px;color:#000;letter-spacing:-0.504px;">    </div>
<div style="position:absolute;left:97px;top:70px;line-height:19.82px;white-space:pre;font-family:'Liberation Mono', monospace;font-size:17.5px;color:#005032;letter-spacing:-0.503px;">SOC_Handle</div>
<div style="position:absolute;left:197px;top:70px;line-height:19.82px;white-space:pre;font-family:'Liberation Mono', monospace;font-size:17.5px;color:#000;letter-spacing:-0.502px;">      socHandle;</div>
<div style="position:absolute;left:14px;top:92px;line-height:19.82px;white-space:pre;font-family:'Liberation Mono', monospace;font-size:17.5px;color:#858585;letter-spacing:-0.504px;">3904</div>
<div style="position:absolute;left:57px;top:92px;line-height:19.82px;white-space:pre;font-family:'Liberation Mono', monospace;font-size:17.5px;color:#000;letter-spacing:-0.504px;">    </div>
<div style="position:absolute;left:97px;top:92px;line-height:19.82px;white-space:pre;font-family:'Liberation Mono', monospace;font-size:17.5px;color:#005032;letter-spacing:-0.502px;">SOC_Cfg</div>
<div style="position:absolute;left:167px;top:92px;line-height:19.82px;white-space:pre;font-family:'Liberation Mono', monospace;font-size:17.5px;color:#000;letter-spacing:-0.502px;">         socCfg;</div>
<div style="position:absolute;left:14px;top:114px;line-height:19.82px;white-space:pre;font-family:'Liberation Mono', monospace;font-size:17.5px;color:#858585;letter-spacing:-0.504px;">3905</div>
<div style="position:absolute;left:14px;top:136px;line-height:19.82px;white-space:pre;font-family:'Liberation Mono', monospace;font-size:17.5px;color:#858585;letter-spacing:-0.504px;">3906</div>
<div style="position:absolute;left:57px;top:136px;line-height:19.82px;white-space:pre;font-family:'Liberation Mono', monospace;font-size:17.5px;color:#3f7f6f;letter-spacing:-0.502px;">    /* Initialize the ESM: Dont clear errors as TI RTOS does it */</div>
<div style="position:absolute;left:14px;top:158px;line-height:19.82px;white-space:pre;font-family:'Liberation Mono', monospace;font-size:17.5px;color:#858585;letter-spacing:-0.504px;">3907</div>
<div style="position:absolute;left:57px;top:158px;line-height:19.82px;white-space:pre;font-family:'Liberation Mono', monospace;font-size:17.5px;color:#000;letter-spacing:-0.504px;">    </div>
<div style="position:absolute;left:97px;top:158px;line-height:19.82px;white-space:pre;font-family:'Liberation Mono', monospace;font-size:17.5px;color:#55177a;font-weight:700;letter-spacing:-0.502px;">ESM_init</div>
<div style="position:absolute;left:177px;top:158px;line-height:19.82px;white-space:pre;font-family:'Liberation Mono', monospace;font-size:17.5px;color:#000;letter-spacing:-0.503px;">(0U);</div>
<div style="position:absolute;left:14px;top:180px;line-height:19.82px;white-space:pre;font-family:'Liberation Mono', monospace;font-size:17.5px;color:#858585;letter-spacing:-0.504px;">3908</div>
<div style="position:absolute;left:14px;top:202px;line-height:19.82px;white-space:pre;font-family:'Liberation Mono', monospace;font-size:17.5px;color:#858585;letter-spacing:-0.504px;">3909</div>
<div style="position:absolute;left:57px;top:202px;line-height:19.82px;white-space:pre;font-family:'Liberation Mono', monospace;font-size:17.5px;color:#3f7f6f;letter-spacing:-0.502px;">    /* Initialize the SOC confiugration: */</div>
<div style="position:absolute;left:14px;top:224px;line-height:19.82px;white-space:pre;font-family:'Liberation Mono', monospace;font-size:17.5px;color:#858585;letter-spacing:-0.504px;">3910</div>
<div style="position:absolute;left:57px;top:224px;line-height:19.82px;white-space:pre;font-family:'Liberation Mono', monospace;font-size:17.5px;color:#000;letter-spacing:-0.504px;">    </div>
<div style="position:absolute;left:97px;top:224px;line-height:19.82px;white-space:pre;font-family:'Liberation Mono', monospace;font-size:17.5px;color:#55177a;font-weight:700;letter-spacing:-0.503px;">memset</div>
<div style="position:absolute;left:157px;top:224px;line-height:19.82px;white-space:pre;font-family:'Liberation Mono', monospace;font-size:17.5px;color:#000;letter-spacing:-0.505px;"> ((</div>
<div style="position:absolute;left:187px;top:224px;line-height:19.82px;white-space:pre;font-family:'Liberation Mono', monospace;font-size:17.5px;color:#7f0055;font-weight:700;letter-spacing:-0.504px;">void</div>
<div style="position:absolute;left:227px;top:224px;line-height:19.82px;white-space:pre;font-family:'Liberation Mono', monospace;font-size:17.5px;color:#000;letter-spacing:-0.502px;"> *)&amp;socCfg, 0, </div>
<div style="position:absolute;left:377px;top:224px;line-height:19.82px;white-space:pre;font-family:'Liberation Mono', monospace;font-size:17.5px;color:#7f0055;font-weight:700;letter-spacing:-0.503px;">sizeof</div>
<div style="position:absolute;left:437px;top:224px;line-height:19.82px;white-space:pre;font-family:'Liberation Mono', monospace;font-size:17.5px;color:#000;">(</div>
<div style="position:absolute;left:447px;top:224px;line-height:19.82px;white-space:pre;font-family:'Liberation Mono', monospace;font-size:17.5px;color:#005032;letter-spacing:-0.502px;">SOC_Cfg</div>
<div style="position:absolute;left:517px;top:224px;line-height:19.82px;white-space:pre;font-family:'Liberation Mono', monospace;font-size:17.5px;color:#000;letter-spacing:-0.505px;">));</div>
<div style="position:absolute;left:14px;top:246px;line-height:19.82px;white-space:pre;font-family:'Liberation Mono', monospace;font-size:17.5px;color:#858585;letter-spacing:-0.504px;">3911</div>
<div style="position:absolute;left:14px;top:268px;line-height:19.82px;white-space:pre;font-family:'Liberation Mono', monospace;font-size:17.5px;color:#858585;letter-spacing:-0.504px;">3912</div>
<div style="position:absolute;left:57px;top:268px;line-height:19.82px;white-space:pre;font-family:'Liberation Mono', monospace;font-size:17.5px;color:#3f7f6f;letter-spacing:-0.502px;">    /* Populate the SOC configuration: */</div>
<div style="position:absolute;left:14px;top:290px;line-height:19.82px;white-space:pre;font-family:'Liberation Mono', monospace;font-size:17.5px;color:#858585;letter-spacing:-0.504px;">3913</div>
<div style="position:absolute;left:57px;top:290px;line-height:19.82px;white-space:pre;font-family:'Liberation Mono', monospace;font-size:17.5px;color:#000;letter-spacing:-0.503px;">    socCfg.</div>
<div style="position:absolute;left:167px;top:290px;line-height:19.82px;white-space:pre;font-family:'Liberation Mono', monospace;font-size:17.5px;color:#0000c0;letter-spacing:-0.502px;">clockCfg</div>
<div style="position:absolute;left:247px;top:290px;line-height:19.82px;white-space:pre;font-family:'Liberation Mono', monospace;font-size:17.5px;color:#000;letter-spacing:-0.505px;"> = </div>
<div style="position:absolute;left:277px;top:290px;line-height:19.82px;white-space:pre;font-family:'Liberation Mono', monospace;font-size:17.5px;color:#0000c0;font-style:italic;letter-spacing:-0.502px;">SOC_SysClock_INIT</div>
<div style="position:absolute;left:447px;top:290px;line-height:19.82px;white-space:pre;font-family:'Liberation Mono', monospace;font-size:17.5px;color:#000;">;</div>
<div style="position:absolute;left:14px;top:312px;line-height:19.82px;white-space:pre;font-family:'Liberation Mono', monospace;font-size:17.5px;color:#858585;letter-spacing:-0.504px;">3914</div>
<div style="position:absolute;left:57px;top:312px;line-height:19.82px;white-space:pre;font-family:'Liberation Mono', monospace;font-size:17.5px;color:#000;letter-spacing:-0.503px;">    socCfg.</div>
<div style="position:absolute;left:167px;top:312px;line-height:19.82px;white-space:pre;font-family:'Liberation Mono', monospace;font-size:17.5px;color:#0000c0;letter-spacing:-0.503px;">mpuCfg</div>
<div style="position:absolute;left:227px;top:312px;line-height:19.82px;white-space:pre;font-family:'Liberation Mono', monospace;font-size:17.5px;color:#000;letter-spacing:-0.505px;"> = </div>
<div style="position:absolute;left:257px;top:312px;line-height:19.82px;white-space:pre;font-family:'Liberation Mono', monospace;font-size:17.5px;color:#0000c0;font-style:italic;letter-spacing:-0.502px;">SOC_MPUCfg_CONFIG</div>
<div style="position:absolute;left:427px;top:312px;line-height:19.82px;white-space:pre;font-family:'Liberation Mono', monospace;font-size:17.5px;color:#000;">;</div>
<div style="position:absolute;left:14px;top:334px;line-height:19.82px;white-space:pre;font-family:'Liberation Mono', monospace;font-size:17.5px;color:#858585;letter-spacing:-0.504px;">3915</div>
<div style="position:absolute;left:57px;top:334px;line-height:19.82px;white-space:pre;font-family:'Liberation Mono', monospace;font-size:17.5px;color:#000;letter-spacing:-0.503px;">    socCfg.</div>
<div style="position:absolute;left:167px;top:334px;line-height:19.82px;white-space:pre;font-family:'Liberation Mono', monospace;font-size:17.5px;color:#0000c0;letter-spacing:-0.503px;">dssCfg</div>
<div style="position:absolute;left:227px;top:334px;line-height:19.82px;white-space:pre;font-family:'Liberation Mono', monospace;font-size:17.5px;color:#000;letter-spacing:-0.505px;"> = </div>
<div style="position:absolute;left:257px;top:334px;line-height:19.82px;white-space:pre;font-family:'Liberation Mono', monospace;font-size:17.5px;color:#0000c0;font-style:italic;letter-spacing:-0.502px;">SOC_DSSCfg_UNHALT</div>
<div style="position:absolute;left:427px;top:334px;line-height:19.82px;white-space:pre;font-family:'Liberation Mono', monospace;font-size:17.5px;color:#000;">;</div>
</div>
<svg style="left:327px;top:588px" width="42" height="4"><polyline points="0,3.5 1,2.0 2,0.5 3,2.0 4,3.5 5,2.0 6,0.5 7,2.0 8,3.5 9,2.0 10,0.5 11,2.0 12,3.5 13,2.0 14,0.5 15,2.0 16,3.5 17,2.0 18,0.5 19,2.0 20,3.5 21,2.0 22,0.5 23,2.0 24,3.5 25,2.0 26,0.5 27,2.0 28,3.5 29,2.0 30,0.5 31,2.0 32,3.5 33,2.0 34,0.5 35,2.0 36,3.5 37,2.0 38,0.5 39,2.0 40,3.5 41,2.0 42,0.5" fill="none" stroke="#f8643c" stroke-width="1"/></svg>
<svg style="left:317px;top:654px" width="130" height="4"><polyline points="0,3.5 1,2.0 2,0.5 3,2.0 4,3.5 5,2.0 6,0.5 7,2.0 8,3.5 9,2.0 10,0.5 11,2.0 12,3.5 13,2.0 14,0.5 15,2.0 16,3.5 17,2.0 18,0.5 19,2.0 20,3.5 21,2.0 22,0.5 23,2.0 24,3.5 25,2.0 26,0.5 27,2.0 28,3.5 29,2.0 30,0.5 31,2.0 32,3.5 33,2.0 34,0.5 35,2.0 36,3.5 37,2.0 38,0.5 39,2.0 40,3.5 41,2.0 42,0.5 43,2.0 44,3.5 45,2.0 46,0.5 47,2.0 48,3.5 49,2.0 50,0.5 51,2.0 52,3.5 53,2.0 54,0.5 55,2.0 56,3.5 57,2.0 58,0.5 59,2.0 60,3.5 61,2.0 62,0.5 63,2.0 64,3.5 65,2.0 66,0.5 67,2.0 68,3.5 69,2.0 70,0.5 71,2.0 72,3.5 73,2.0 74,0.5 75,2.0 76,3.5 77,2.0 78,0.5 79,2.0 80,3.5 81,2.0 82,0.5 83,2.0 84,3.5 85,2.0 86,0.5 87,2.0 88,3.5 89,2.0 90,0.5 91,2.0 92,3.5 93,2.0 94,0.5 95,2.0 96,3.5 97,2.0 98,0.5 99,2.0 100,3.5 101,2.0 102,0.5 103,2.0 104,3.5 105,2.0 106,0.5 107,2.0 108,3.5 109,2.0 110,0.5 111,2.0 112,3.5 113,2.0 114,0.5 115,2.0 116,3.5 117,2.0 118,0.5 119,2.0 120,3.5 121,2.0 122,0.5 123,2.0 124,3.5 125,2.0 126,0.5 127,2.0 128,3.5 129,2.0 130,0.5" fill="none" stroke="#f8643c" stroke-width="1"/></svg>
<div style="position:absolute;left:854px;top:437px;width:16px;height:340px;background:#efefef;"></div>
<div style="position:absolute;left:854px;top:739px;width:16px;height:17px;background:#cdcdcd;"></div>
<svg style="left:856px;top:443px;" width="12" height="8" viewBox="0 0 12 8"><path d="M2,6 L6,2 L10,6" fill="none" stroke="#444" stroke-width="1.8"/></svg>
<svg style="left:856px;top:764px;" width="12" height="8" viewBox="0 0 12 8"><path d="M2,2 L6,6 L10,2" fill="none" stroke="#444" stroke-width="1.8"/></svg>
<div style="position:absolute;left:870px;top:437px;width:14px;height:356px;background:#f7f7f7;"></div>
<div style="position:absolute;left:872px;top:442px;width:8px;height:7px;background:#f5c422;box-sizing:border-box;border:1px solid #d9a400;"></div>
<div style="position:absolute;left:870px;top:454px;width:12px;height:1px;background:#b0b0b0;"></div>
<div style="position:absolute;left:872px;top:540px;width:9px;height:5px;background:#fbeeb8;box-sizing:border-box;border:1px solid #f0c84a;"></div>
<div style="position:absolute;left:872px;top:574px;width:9px;height:5px;background:#fbeeb8;box-sizing:border-box;border:1px solid #f0c84a;"></div>
<div style="position:absolute;left:1px;top:776px;width:54px;height:17px;background:#f5f5f5;"></div>
<div style="position:absolute;left:55px;top:776px;width:815px;height:17px;background:#efefef;"></div>
<svg style="left:59px;top:780px;" width="8" height="10" viewBox="0 0 8 10"><path d="M6,1 L2,5 L6,9" fill="none" stroke="#aaa" stroke-width="1.6"/></svg>
<svg style="left:841px;top:780px;" width="8" height="10" viewBox="0 0 8 10"><path d="M2,1 L6,5 L2,9" fill="none" stroke="#aaa" stroke-width="1.6"/></svg>
<div style="position:absolute;left:889px;top:411px;width:402px;height:383px;background:#fff;box-sizing:border-box;border:1px solid #e3e3e3;border-right:none;border-radius:4px 0 0 0;"></div>
<div style="position:absolute;left:890px;top:412px;width:401px;height:25px;background:linear-gradient(#f9f9f9,#f0f0f0);border-radius:3px 0 0 0;"></div>
<div style="position:absolute;left:890px;top:412px;width:144px;height:25px;background:#fff;border-radius:3px 3px 0 0;"></div>
<div style="position:absolute;left:1034px;top:412px;width:1px;height:25px;background:#e6e6e6;"></div>
<div style="position:absolute;left:913.5px;top:419px;line-height:13.96px;white-space:pre;font-family:'Liberation Sans', sans-serif;font-size:12.5px;color:#000;letter-spacing:0.074px;">Memory Browser</div>
<svg style="left:1017px;top:420px;" width="10" height="10" viewBox="0 0 10 10"><g fill="#5a5a5a" shape-rendering="crispEdges"><rect x="0" y="0" width="1" height="1"/><rect x="1" y="0" width="1" height="1"/><rect x="2" y="0" width="1" height="1"/><rect x="7" y="0" width="1" height="1"/><rect x="8" y="0" width="1" height="1"/><rect x="9" y="0" width="1" height="1"/><rect x="0" y="1" width="1" height="1"/><rect x="3" y="1" width="1" height="1"/><rect x="6" y="1" width="1" height="1"/><rect x="9" y="1" width="1" height="1"/><rect x="0" y="2" width="1" height="1"/><rect x="4" y="2" width="1" height="1"/><rect x="5" y="2" width="1" height="1"/><rect x="9" y="2" width="1" height="1"/><rect x="1" y="3" width="1" height="1"/><rect x="8" y="3" width="1" height="1"/><rect x="2" y="4" width="1" height="1"/><rect x="7" y="4" width="1" height="1"/><rect x="2" y="5" width="1" height="1"/><rect x="7" y="5" width="1" height="1"/><rect x="1" y="6" width="1" height="1"/><rect x="8" y="6" width="1" height="1"/><rect x="0" y="7" width="1" height="1"/><rect x="4" y="7" width="1" height="1"/><rect x="5" y="7" width="1" height="1"/><rect x="9" y="7" width="1" height="1"/><rect x="0" y="8" width="1" height="1"/><rect x="3" y="8" width="1" height="1"/><rect x="6" y="8" width="1" height="1"/><rect x="9" y="8" width="1" height="1"/><rect x="0" y="9" width="1" height="1"/><rect x="1" y="9" width="1" height="1"/><rect x="2" y="9" width="1" height="1"/><rect x="7" y="9" width="1" height="1"/><rect x="8" y="9" width="1" height="1"/><rect x="9" y="9" width="1" height="1"/></g></svg>
<svg style="left:898px;top:418px;" width="10" height="15" viewBox="0 0 10 15"><defs><linearGradient id="cyl" x1="0" x2="1"><stop offset="0" stop-color="#3a6cc0"/><stop offset="0.45" stop-color="#e8f0ff"/><stop offset="1" stop-color="#2a5ab0"/></linearGradient></defs>
<path d="M0.5,2.5 Q0.5,0.5 5,0.5 Q9.5,0.5 9.5,2.5 L9.5,12.5 Q9.5,14.5 5,14.5 Q0.5,14.5 0.5,12.5 Z" fill="url(#cyl)" stroke="#2a5ab0"/>
<ellipse cx="5" cy="2.5" rx="4.5" ry="1.5" fill="#9ab8e8" stroke="#2a5ab0" stroke-width="0.8"/></svg>
<div style="position:absolute;left:903px;top:438px;width:388px;height:21px;background:#fff;box-sizing:border-box;border:1px solid #7a7a7a;border-right:none;"></div>
<div style="position:absolute;left:907px;top:443px;line-height:13.96px;white-space:pre;font-family:'Liberation Sans', sans-serif;font-size:12.5px;color:#000;letter-spacing:-0.731px;">0xFFFFE11c</div>
<div style="position:absolute;left:891px;top:460px;width:400px;height:333px;background:#fff;box-sizing:border-box;border-left:1px solid #8c8c8c;border-bottom:1px solid #8c8c8c;"></div>
<div style="position:absolute;left:891px;top:479px;width:400px;height:1px;background:#a0a0a0;"></div>
<div style="position:absolute;left:1192px;top:460px;width:99px;height:20px;background:#fff;box-sizing:border-box;border-top:1px solid #a0a0a0;border-bottom:1px solid #a0a0a0;"></div>
<div style="position:absolute;left:892px;top:460px;width:300px;height:1px;background:#a0a0a0;border-radius:3px 3px 0 0;"></div>
<div style="position:absolute;left:1192px;top:460px;width:1px;height:20px;background:#a0a0a0;"></div>
<div style="position:absolute;left:892px;top:479px;width:300px;height:1px;background:#fff;"></div>
<div style="position:absolute;left:895px;top:465px;line-height:13.96px;white-space:pre;font-family:'Liberation Sans', sans-serif;font-size:12.5px;color:#000;letter-spacing:0.027px;">0xffffe11c - 0xFFFFE11c &lt;Memory Rendering 1&gt;</div>
<svg style="left:1175px;top:465px;" width="10" height="10" viewBox="0 0 10 10"><g fill="#5a5a5a" shape-rendering="crispEdges"><rect x="0" y="0" width="1" height="1"/><rect x="1" y="0" width="1" height="1"/><rect x="2" y="0" width="1" height="1"/><rect x="7" y="0" width="1" height="1"/><rect x="8" y="0" width="1" height="1"/><rect x="9" y="0" width="1" height="1"/><rect x="0" y="1" width="1" height="1"/><rect x="3" y="1" width="1" height="1"/><rect x="6" y="1" width="1" height="1"/><rect x="9" y="1" width="1" height="1"/><rect x="0" y="2" width="1" height="1"/><rect x="4" y="2" width="1" height="1"/><rect x="5" y="2" width="1" height="1"/><rect x="9" y="2" width="1" height="1"/><rect x="1" y="3" width="1" height="1"/><rect x="8" y="3" width="1" height="1"/><rect x="2" y="4" width="1" height="1"/><rect x="7" y="4" width="1" height="1"/><rect x="2" y="5" width="1" height="1"/><rect x="7" y="5" width="1" height="1"/><rect x="1" y="6" width="1" height="1"/><rect x="8" y="6" width="1" height="1"/><rect x="0" y="7" width="1" height="1"/><rect x="4" y="7" width="1" height="1"/><rect x="5" y="7" width="1" height="1"/><rect x="9" y="7" width="1" height="1"/><rect x="0" y="8" width="1" height="1"/><rect x="3" y="8" width="1" height="1"/><rect x="6" y="8" width="1" height="1"/><rect x="9" y="8" width="1" height="1"/><rect x="0" y="9" width="1" height="1"/><rect x="1" y="9" width="1" height="1"/><rect x="2" y="9" width="1" height="1"/><rect x="7" y="9" width="1" height="1"/><rect x="8" y="9" width="1" height="1"/><rect x="9" y="9" width="1" height="1"/></g></svg>
<div style="position:absolute;left:896px;top:482px;width:163px;height:23px;background:#e1e1e1;box-sizing:border-box;border:1px solid #adadad;"></div>
<div style="position:absolute;left:900.5px;top:488px;line-height:13.96px;white-space:pre;font-family:'Liberation Sans', sans-serif;font-size:12.5px;color:#000;letter-spacing:-0.172px;">32-Bit Hex - TI Style</div>
<svg style="left:1047px;top:490px;" width="12" height="8" viewBox="0 0 12 8"><path d="M2,1.5 L6,5.5 L10,1.5" fill="none" stroke="#333" stroke-width="1.2"/></svg>
<div style="position:absolute;left:900px;top:530px;width:101px;height:22px;background:#0078d7;"></div>
<div style="position:absolute;left:1014px;top:530px;width:84px;height:22px;background:#0078d7;"></div>
<div style="position:absolute;left:900px;top:511px;line-height:19.82px;white-space:pre;font-family:'Liberation Mono', monospace;font-size:17.5px;color:#000;letter-spacing:-0.503px;">0xFFFFE11C</div>
<div style="position:absolute;left:1014px;top:511px;line-height:19.82px;white-space:pre;font-family:'Liberation Mono', monospace;font-size:17.5px;color:#0000ff;letter-spacing:-0.502px;">TOPRCM_SOFTSYSRST</div>
<div style="position:absolute;left:900px;top:533px;line-height:19.82px;white-space:pre;font-family:'Liberation Mono', monospace;font-size:17.5px;color:#fff;letter-spacing:-0.503px;">0xFFFFE11C</div>
<div style="position:absolute;left:1015px;top:533px;line-height:19.82px;white-space:pre;font-family:'Liberation Mono', monospace;font-size:17.5px;color:#fff;letter-spacing:-0.502px;">00000000</div>
<div style="position:absolute;left:900px;top:555px;line-height:19.82px;white-space:pre;font-family:'Liberation Mono', monospace;font-size:17.5px;color:#000;letter-spacing:-0.503px;">0xFFFFE120</div>
<div style="position:absolute;left:1014px;top:555px;line-height:19.82px;white-space:pre;font-family:'Liberation Mono', monospace;font-size:17.5px;color:#0000ff;letter-spacing:-0.502px;">TOPRCM_WDRSTEN</div>
<div style="position:absolute;left:900px;top:577px;line-height:19.82px;white-space:pre;font-family:'Liberation Mono', monospace;font-size:17.5px;color:#000;letter-spacing:-0.503px;">0xFFFFE120</div>
<div style="position:absolute;left:1015px;top:577px;line-height:19.82px;white-space:pre;font-family:'Liberation Mono', monospace;font-size:17.5px;color:#000;letter-spacing:-0.502px;">000000AD</div>
<div style="position:absolute;left:900px;top:599px;line-height:19.82px;white-space:pre;font-family:'Liberation Mono', monospace;font-size:17.5px;color:#000;letter-spacing:-0.503px;">0xFFFFE124</div>
<div style="position:absolute;left:1014px;top:599px;line-height:19.82px;white-space:pre;font-family:'Liberation Mono', monospace;font-size:17.5px;color:#0000ff;letter-spacing:-0.502px;">TOPRCM_SYSRSTCAUSE</div>
<div style="position:absolute;left:900px;top:621px;line-height:19.82px;white-space:pre;font-family:'Liberation Mono', monospace;font-size:17.5px;color:#000;letter-spacing:-0.503px;">0xFFFFE124</div>
<div style="position:absolute;left:1015px;top:621px;line-height:19.82px;white-space:pre;font-family:'Liberation Mono', monospace;font-size:17.5px;color:#000;letter-spacing:-0.502px;">00000000</div>
<div style="position:absolute;left:900px;top:643px;line-height:19.82px;white-space:pre;font-family:'Liberation Mono', monospace;font-size:17.5px;color:#000;letter-spacing:-0.503px;">0xFFFFE128</div>
<div style="position:absolute;left:1014px;top:643px;line-height:19.82px;white-space:pre;font-family:'Liberation Mono', monospace;font-size:17.5px;color:#0000ff;letter-spacing:-0.502px;">TOPRCM_SYSRSTCAUSECLR</div>
<div style="position:absolute;left:900px;top:665px;line-height:19.82px;white-space:pre;font-family:'Liberation Mono', monospace;font-size:17.5px;color:#000;letter-spacing:-0.503px;">0xFFFFE128</div>
<div style="position:absolute;left:1015px;top:665px;line-height:19.82px;white-space:pre;font-family:'Liberation Mono', monospace;font-size:17.5px;color:#000;letter-spacing:-0.502px;">00000000</div>
<div style="position:absolute;left:1099px;top:665px;line-height:19.82px;white-space:pre;font-family:'Liberation Mono', monospace;font-size:17.5px;color:#000;letter-spacing:-0.502px;">0E000F00</div>
<div style="position:absolute;left:1183px;top:665px;line-height:19.82px;white-space:pre;font-family:'Liberation Mono', monospace;font-size:17.5px;color:#000;letter-spacing:-0.502px;">00060F00</div>
<div style="position:absolute;left:900px;top:687px;line-height:19.82px;white-space:pre;font-family:'Liberation Mono', monospace;font-size:17.5px;color:#000;letter-spacing:-0.503px;">0xFFFFE134</div>
<div style="position:absolute;left:1014px;top:687px;line-height:19.82px;white-space:pre;font-family:'Liberation Mono', monospace;font-size:17.5px;color:#0000ff;letter-spacing:-0.502px;">TOPRCM_MISCCAPT</div>
<div style="position:absolute;left:900px;top:709px;line-height:19.82px;white-space:pre;font-family:'Liberation Mono', monospace;font-size:17.5px;color:#000;letter-spacing:-0.503px;">0xFFFFE134</div>
<div style="position:absolute;left:1015px;top:709px;line-height:19.82px;white-space:pre;font-family:'Liberation Mono', monospace;font-size:17.5px;color:#000;letter-spacing:-0.502px;">00000060</div>
<div style="position:absolute;left:900px;top:731px;line-height:19.82px;white-space:pre;font-family:'Liberation Mono', monospace;font-size:17.5px;color:#000;letter-spacing:-0.503px;">0xFFFFE138</div>
<div style="position:absolute;left:1014px;top:731px;line-height:19.82px;white-space:pre;font-family:'Liberation Mono', monospace;font-size:17.5px;color:#0000ff;letter-spacing:-0.502px;">TOPRCM_DCDCCTL0</div>
<div style="position:absolute;left:900px;top:753px;line-height:19.82px;white-space:pre;font-family:'Liberation Mono', monospace;font-size:17.5px;color:#000;letter-spacing:-0.503px;">0xFFFFE138</div>
<div style="position:absolute;left:1015px;top:753px;line-height:19.82px;white-space:pre;font-family:'Liberation Mono', monospace;font-size:17.5px;color:#000;letter-spacing:-0.502px;">00000000</div>
<div style="position:absolute;left:878px;top:514px;width:236px;height:47px;background:transparent;box-sizing:border-box;border:5px solid #ec1c24;"></div>
<div style="position:absolute;left:0px;top:793px;width:1291px;height:1px;background:#fff;"></div>
<div style="position:absolute;left:0px;top:794px;width:1291px;height:6px;background:#e6e6e6;"></div>
<div style="position:absolute;left:0px;top:800px;width:1291px;height:25px;background:linear-gradient(#f9f9f9,#f0f0f0);"></div>
<div style="position:absolute;left:0px;top:824px;width:1291px;height:1px;background:#e6e6e6;"></div>
<div style="position:absolute;left:1px;top:800px;width:94px;height:25px;background:#fff;border-radius:3px 3px 0 0;"></div>
<div style="position:absolute;left:95px;top:800px;width:1px;height:25px;background:#e6e6e6;"></div>
<div style="position:absolute;left:0px;top:800px;width:1px;height:196px;background:#e3e3e3;"></div>
<div style="position:absolute;left:25px;top:807px;line-height:13.96px;white-space:pre;font-family:'Liberation Sans', sans-serif;font-size:12.5px;color:#000;letter-spacing:0.018px;">Console</div>
<svg style="left:78px;top:808px;" width="10" height="10" viewBox="0 0 10 10"><g fill="#5a5a5a" shape-rendering="crispEdges"><rect x="0" y="0" width="1" height="1"/><rect x="1" y="0" width="1" height="1"/><rect x="2" y="0" width="1" height="1"/><rect x="7" y="0" width="1" height="1"/><rect x="8" y="0" width="1" height="1"/><rect x="9" y="0" width="1" height="1"/><rect x="0" y="1" width="1" height="1"/><rect x="3" y="1" width="1" height="1"/><rect x="6" y="1" width="1" height="1"/><rect x="9" y="1" width="1" height="1"/><rect x="0" y="2" width="1" height="1"/><rect x="4" y="2" width="1" height="1"/><rect x="5" y="2" width="1" height="1"/><rect x="9" y="2" width="1" height="1"/><rect x="1" y="3" width="1" height="1"/><rect x="8" y="3" width="1" height="1"/><rect x="2" y="4" width="1" height="1"/><rect x="7" y="4" width="1" height="1"/><rect x="2" y="5" width="1" height="1"/><rect x="7" y="5" width="1" height="1"/><rect x="1" y="6" width="1" height="1"/><rect x="8" y="6" width="1" height="1"/><rect x="0" y="7" width="1" height="1"/><rect x="4" y="7" width="1" height="1"/><rect x="5" y="7" width="1" height="1"/><rect x="9" y="7" width="1" height="1"/><rect x="0" y="8" width="1" height="1"/><rect x="3" y="8" width="1" height="1"/><rect x="6" y="8" width="1" height="1"/><rect x="9" y="8" width="1" height="1"/><rect x="0" y="9" width="1" height="1"/><rect x="1" y="9" width="1" height="1"/><rect x="2" y="9" width="1" height="1"/><rect x="7" y="9" width="1" height="1"/><rect x="8" y="9" width="1" height="1"/><rect x="9" y="9" width="1" height="1"/></g></svg>
<svg style="left:7px;top:806px;" width="14" height="14" viewBox="0 0 14 14"><rect x="1" y="1" width="12" height="9.5" rx="1.5" fill="#fff" stroke="#2f62ad" stroke-width="2"/>
<rect x="2" y="2" width="10" height="7.5" fill="#f0f6ff"/>
<line x1="3" y1="4.5" x2="7.5" y2="4.5" stroke="#3b66a8" stroke-width="1"/><line x1="3" y1="6.5" x2="10" y2="6.5" stroke="#3b66a8" stroke-width="1"/>
<rect x="5.5" y="10.5" width="3" height="1.5" fill="#2f62ad"/><rect x="2" y="12" width="10" height="2" rx="0.8" fill="#2f62ad"/></svg>
<div style="position:absolute;left:2px;top:828px;line-height:13.96px;white-space:pre;font-family:'Liberation Sans', sans-serif;font-size:12.5px;color:#000;letter-spacing:-0.264px;">AWR1642_SDK3-2.ccxml:CIO</div>
<div style="position:absolute;left:2px;top:841px;width:1289px;height:1px;background:#a0a0a0;"></div>
<div style="position:absolute;left:3px;top:846px;line-height:19.82px;white-space:pre;font-family:'Liberation Mono', monospace;font-size:17.5px;color:#000;letter-spacing:-0.502px;">Debug: Launched the Initialization Task</div>
<div style="position:absolute;left:3px;top:868px;line-height:19.82px;white-space:pre;font-family:'Liberation Mono', monospace;font-size:17.5px;color:#000;letter-spacing:-0.502px;">Debug: mmWave Control Initialization was successful</div>
<div style="position:absolute;left:3px;top:890px;line-height:19.82px;white-space:pre;font-family:'Liberation Mono', monospace;font-size:17.5px;color:#000;letter-spacing:-0.502px;">Debug: mmWave Control Synchronization was successful</div>
<div style="position:absolute;left:3px;top:912px;line-height:19.82px;white-space:pre;font-family:'Liberation Mono', monospace;font-size:17.5px;color:#000;letter-spacing:-0.502px;">[C674X_0] Debug: DPM Module Sync is done</div>
<div style="position:absolute;left:3px;top:934px;line-height:19.82px;white-space:pre;font-family:'Liberation Mono', monospace;font-size:17.5px;color:#000;letter-spacing:-0.502px;">[Cortex_R4_0] Debug: CLI is operational</div>
<div style="position:absolute;left:2px;top:995px;width:1289px;height:1px;background:#ededed;"></div>
</body></html>
